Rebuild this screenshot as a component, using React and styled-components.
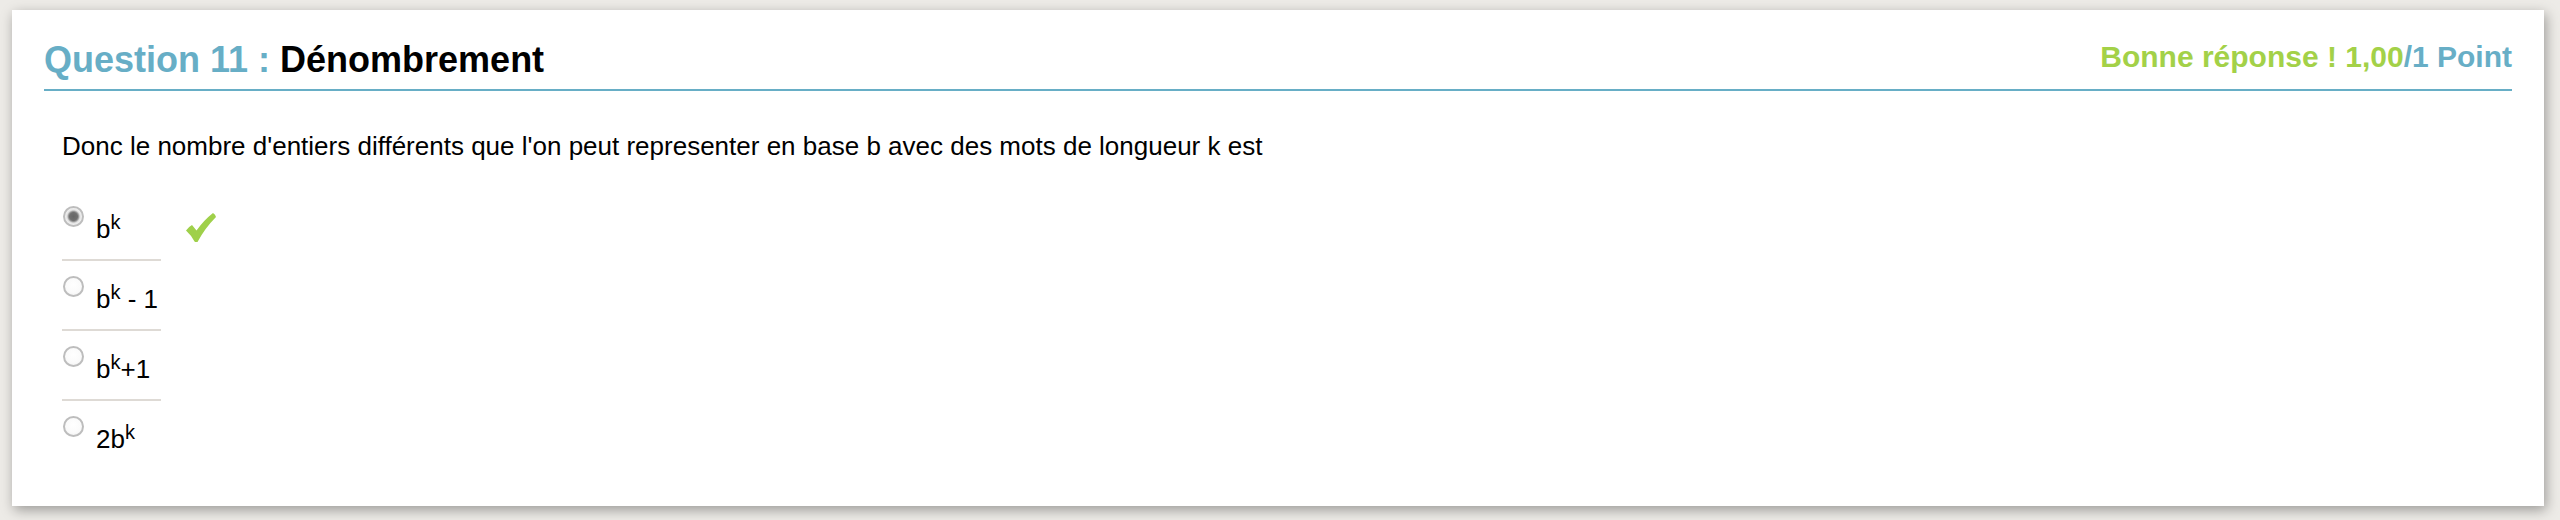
import styled, { createGlobalStyle } from 'styled-components';

const GlobalStyle = createGlobalStyle`
    html, body {
        margin: 0;
        padding: 0;
        background-color: #edebe7;
        font-family: "Liberation Sans", Arial, Helvetica, sans-serif;
    }
`;

const Page = styled.div`
    padding: 10px 16px 16px 12px;
`;

const Card = styled.div`
    background-color: white;
    padding: 30px 32px 35px;
    box-shadow: 2px 4px 12px rgba(0, 0, 0, 0.35);
`;

const Header = styled.div`
    display: flex;
    justify-content: space-between;
    align-items: flex-start;
    padding-bottom: 9px;
    border-bottom: 2px solid #67aec6;
`;

const Title = styled.h2`
    margin: 0;
    font-size: 36px;
    line-height: 40px;
    font-weight: bold;
    color: #000;
`;

const Blue = styled.span`
    color: #67aec6;
`;

const Green = styled.span`
    color: #a3d148;
`;

const Score = styled.div`
    font-size: 30px;
    line-height: 34px;
    font-weight: bold;
`;

const Body = styled.div`
    padding: 0 18px;
`;

const Question = styled.p`
    margin: 40px 0 0;
    font-size: 26px;
    line-height: 30px;
    color: #000;
`;

const Options = styled.div`
    margin-top: 30px;
    display: flex;
    flex-direction: column;
`;

const Row = styled.div`
    display: flex;
    align-items: flex-start;
`;

const Choice = styled.label`
    display: flex;
    align-items: flex-start;
    width: 99px;
    height: 68px;
    border-bottom: ${(p) => (p.last ? '2px solid transparent' : '2px solid #dedad5')};
`;

const Radio = styled.span`
    flex: none;
    width: 21px;
    height: 21px;
    margin: 15px 0 0 1px;
    box-sizing: border-box;
    border-radius: 50%;
    border: 2px solid #bdbdbd;
    background: ${(p) =>
        p.checked
            ? 'radial-gradient(circle, #666 0, #707070 4px, #959595 5px, #e2e2e2 6.5px, #f8f8f8 9px)'
            : 'radial-gradient(circle at 50% 40%, #ffffff 0, #fafafa 60%, #ededed 100%)'};
`;

const Label = styled.span`
    margin: 23px 0 0 12px;
    font-size: 26px;
    line-height: 30px;
    color: #000;
    white-space: nowrap;

    sup {
        font-size: 20px;
        line-height: 0;
        vertical-align: 9px;
    }
`;

const Check = styled.svg`
    flex: none;
    margin: 22px 0 0 25px;
    width: 30px;
    height: 29px;
`;

const options = [
    { id: 1, label: <>b<sup>k</sup></>, checked: true },
    { id: 2, label: <>b<sup>k</sup> - 1</> },
    { id: 3, label: <>b<sup>k</sup>+1</> },
    { id: 4, label: <>2b<sup>k</sup></> },
];

const CheckMark = () => (
    <Check viewBox="0 0 30 29">
        <path
            d="M0 17.5 Q3 13.5 6 12 L10.5 17.5 Q18 7 27 0 Q29.5 1.5 30 4 Q19 15 11.5 29 Q9.5 29.5 8.5 28.5 Q5 22 0 17.5 Z"
            fill="#9fd04a"
        />
    </Check>
);

const App = () => {
    return (
        <>
            <GlobalStyle />
            <Page>
                <Card>
                    <Header>
                        <Title>
                            <Blue>Question 11 : </Blue>Dénombrement
                        </Title>
                        <Score>
                            <Green>Bonne réponse ! 1,00</Green>
                            <Blue>/1 Point</Blue>
                        </Score>
                    </Header>
                    <Body>
                        <Question>
                            Donc le nombre d'entiers différents que l'on peut representer en base b avec des mots de longueur k est
                        </Question>
                        <Options>
                            {options.map((o, i) => (
                                <Row key={o.id}>
                                    <Choice last={i === options.length - 1}>
                                        <Radio checked={o.checked} />
                                        <Label>{o.label}</Label>
                                    </Choice>
                                    {o.checked && <CheckMark />}
                                </Row>
                            ))}
                        </Options>
                    </Body>
                </Card>
            </Page>
        </>
    );
};

export default App;
